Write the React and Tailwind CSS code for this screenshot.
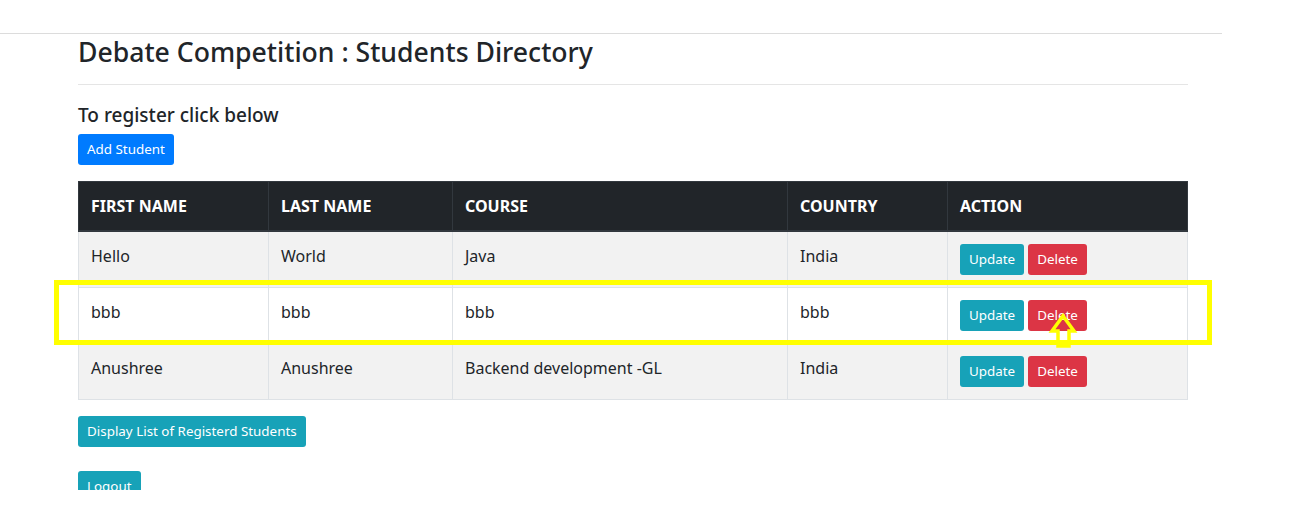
import React from 'react';

const students = [
  { first: 'Hello', last: 'World', course: 'Java', country: 'India' },
  { first: 'bbb', last: 'bbb', course: 'bbb', country: 'bbb' },
  { first: 'Anushree', last: 'Anushree', course: 'Backend development -GL', country: 'India' },
];

const btn = 'px-2 py-1 text-[13.4px] leading-[21px] text-white rounded-[3px] border border-transparent';

export default function App() {
  return (
    <div className="relative h-[523px] overflow-hidden bg-white text-[#212529]" style={{ fontFamily: '"Noto Sans", "Open Sans", sans-serif' }}>
      <div className="h-[34px] w-[1222px] border-b border-[#dcdcdc]" />
      <div className="h-[456px] overflow-hidden">
        <div className="ml-[78px] w-[1110px]">
          <h3 className="pt-[1px] text-[26.6px] leading-[34px] font-medium">Debate Competition : Students Directory</h3>
          <hr className="mt-[15px] border-t border-[#e5e5e5]" />
          <h5 className="mt-[18px] text-[19px] leading-[24px] font-medium">To register click below</h5>
          <div className="mt-[7px] flex">
            <button className={`${btn} bg-[#007bff]`}>Add Student</button>
          </div>

          <table className="mt-[16px] w-[1110px] border-collapse text-base">
            <thead>
              <tr className="bg-[#212529] text-white">
                <th className="w-[190px] border border-[#32383e] border-b-2 px-3 py-3 text-left font-bold uppercase leading-6">First Name</th>
                <th className="w-[184px] border border-[#32383e] border-b-2 px-3 py-3 text-left font-bold uppercase leading-6">Last Name</th>
                <th className="w-[335px] border border-[#32383e] border-b-2 px-3 py-3 text-left font-bold uppercase leading-6">Course</th>
                <th className="w-[160px] border border-[#32383e] border-b-2 px-3 py-3 text-left font-bold uppercase leading-6">Country</th>
                <th className="border border-[#32383e] border-b-2 px-3 py-3 text-left font-bold uppercase leading-6">Action</th>
              </tr>
            </thead>
            <tbody>
              {students.map((s, i) => (
                <tr key={i} className={i % 2 === 0 ? 'bg-[#f2f2f2]' : 'bg-white'}>
                  <td className="border border-[#dee2e6] px-3 py-3 align-top leading-6">{s.first}</td>
                  <td className="border border-[#dee2e6] px-3 py-3 align-top leading-6">{s.last}</td>
                  <td className="border border-[#dee2e6] px-3 py-3 align-top leading-6">{s.course}</td>
                  <td className="border border-[#dee2e6] px-3 py-3 align-top leading-6">{s.country}</td>
                  <td className="border border-[#dee2e6] px-3 py-3 align-top leading-6">
                    <div className="flex gap-1">
                      <button className={`${btn} bg-[#17a2b8]`}>Update</button>
                      <button className={`${btn} bg-[#dc3545]`}>Delete</button>
                    </div>
                  </td>
                </tr>
              ))}
            </tbody>
          </table>

          <div className="mt-[16px] flex">
            <button className={`${btn} bg-[#17a2b8]`}>Display List of Registerd Students</button>
          </div>
          <div className="mt-[24px] flex">
            <button className={`${btn} bg-[#17a2b8]`}>Logout</button>
          </div>
        </div>
      </div>

      {/* annotation overlay */}
      <div className="absolute left-[54px] top-[280px] h-[65px] w-[1158px] border-[5px] border-[#ffff00]" />
      <svg className="absolute left-[1048px] top-[312px]" width="32" height="38" viewBox="0 0 32 38">
        <polygon points="15,4 26,19 21,19 21,34 10,34 10,19 4,19" fill="none" stroke="#ffff00" strokeWidth="3.5" strokeLinejoin="miter" />
      </svg>
    </div>
  );
}
